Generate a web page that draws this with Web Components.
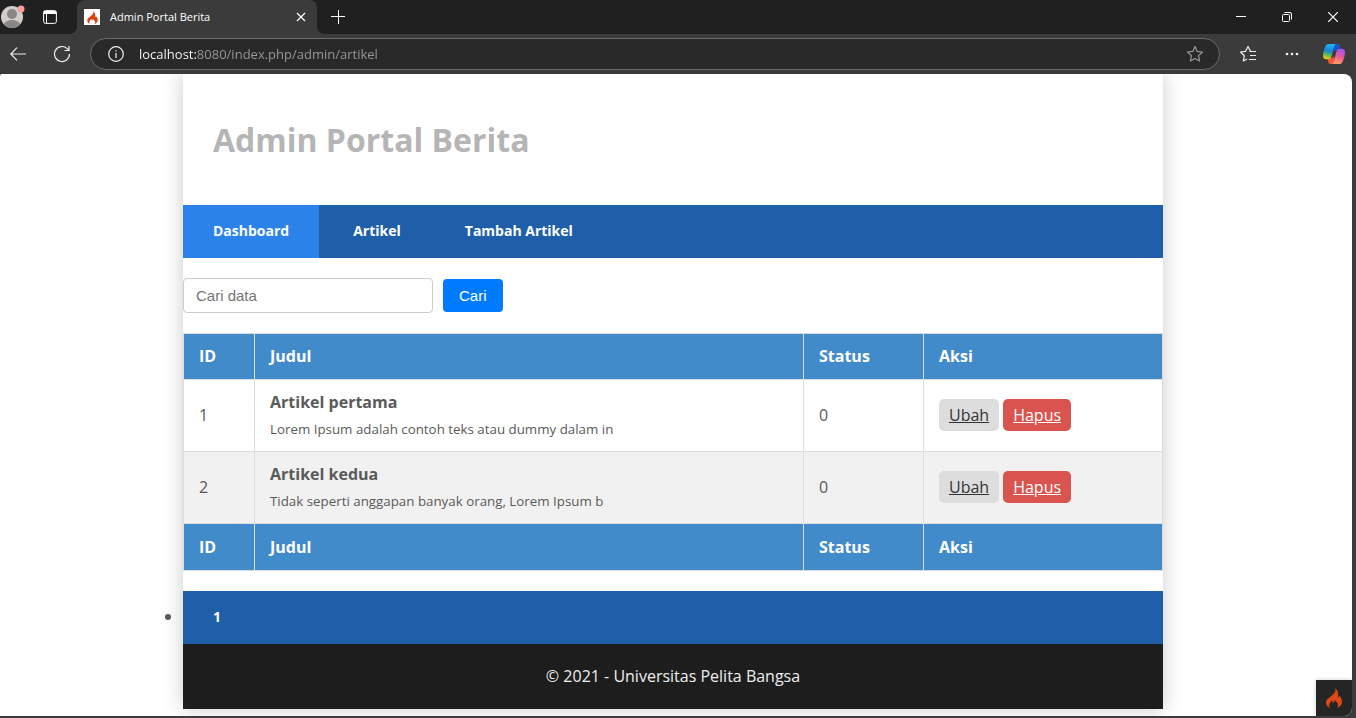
<!DOCTYPE html>
<html lang="id">
<head>
<meta charset="utf-8">
<meta name="viewport" content="width=device-width, initial-scale=1">
<title>Admin Portal Berita</title>
<style>
  html, body { margin: 0; }
  body { background: #3b3b3b; font-family: "Open Sans", "Noto Sans", sans-serif; font-size: 16px; color: #5a5a5a; }
</style>
</head>
<body>
<browser-window>
  <browser-tabs slot="tabs" label="Admin Portal Berita"></browser-tabs>
  <browser-toolbar slot="toolbar" url="localhost:8080/index.php/admin/artikel"></browser-toolbar>
  <portal-page>
    <portal-header slot="header">Admin Portal Berita</portal-header>
    <portal-nav slot="nav"></portal-nav>
    <search-form></search-form>
    <article-table></article-table>
    <page-list slot="pager"></page-list>
    <portal-footer slot="footer">© 2021 - Universitas Pelita Bangsa</portal-footer>
  </portal-page>
  <debug-toggle slot="corner"></debug-toggle>
</browser-window>

<script>
const FLAME = '<path d="M9 0C10.500 3.500 8 5.500 5.500 7.800 2.500 10.500 0 11.500 0 14.500 0 17.300 1.800 19.300 4.500 20 3 18.600 2.800 16.800 3.800 15.200 4.600 14 5.600 13.400 5.600 12 6.600 12.800 6.800 14 6.600 14.900 8 15 8.600 13.600 8.300 12.200 10.600 13.600 12 15 12 17 12 18.400 11.400 19.400 10.600 20 14 19.200 16 17 16 13.800 16 11 14.600 9 13.200 7.600 13.200 8.600 12.800 9.300 12 9.600 12.800 5.500 11.800 2 9 0z"/>';

function define(name, html, setup) {
  const tpl = document.createElement('template');
  tpl.innerHTML = html;
  customElements.define(name, class extends HTMLElement {
    constructor() {
      super();
      this.attachShadow({ mode: 'open' }).append(tpl.content.cloneNode(true));
    }
    connectedCallback() { if (setup) setup(this, this.shadowRoot); }
  });
}

/* ---------- Browser frame ---------- */
define('browser-window', `
<style>
  :host { display: flex; flex-direction: column; min-height: 100vh; box-sizing: border-box; }
  main { flex: 1; position: relative; margin: 0 4px 2px 0; background: #fff; border-radius: 2px 8px 8px 0; overflow: hidden; }
  .corner { position: absolute; right: 0; bottom: 0; }
</style>
<slot name="tabs"></slot>
<slot name="toolbar"></slot>
<main><slot></slot><div class="corner"><slot name="corner"></slot></div></main>`);

define('browser-tabs', `
<style>
  :host { display: flex; height: 34px; background: #202020; color: #fff; font-size: 11px; line-height: 16px; }
  button { border: 0; padding: 0; background: none; color: inherit; display: grid; place-items: center; }
  svg { display: block; fill: none; stroke: #fff; }
  .me { width: 28px; }
  .panes { width: 44px; }
  .lead { display: flex; flex: none; width: 77px; }
  .tab { display: flex; align-items: center; box-sizing: border-box; width: 240px; padding: 0 8px 0 7px; background: #3b3b3b; border-radius: 8px 8px 0 0; position: relative; }
  .tab::before, .tab::after { content: ""; position: absolute; bottom: 0; width: 8px; height: 8px; }
  .tab::before { left: -8px; background: radial-gradient(circle at 0 0, #202020 8px, #3b3b3b 8px); }
  .tab::after { right: -8px; background: radial-gradient(circle at 100% 0, #202020 8px, #3b3b3b 8px); }
  .fav { width: 16px; height: 16px; background: #fff; display: grid; place-items: center; }
  .fav svg { fill: #d6430f; stroke: none; }
  .name { flex: 1; margin-left: 10px; }
  .tab button { width: 16px; height: 16px; }
  .add { width: 42px; }
  .wins { display: flex; margin-left: auto; }
  .wins button { width: 46px; }
</style>
<div class="lead">
  <button class="me" aria-label="Profil"><svg width="28" height="28" viewBox="0 0 28 28" stroke="none">
    <clipPath id="c"><circle cx="12" cy="14" r="11"/></clipPath>
    <g clip-path="url(#c)" stroke="none"><rect width="28" height="28" fill="#d0cdca"/><circle cx="12" cy="11" r="5" fill="#8a8683"/><ellipse cx="12" cy="22" rx="8" ry="5" fill="#8a8683"/></g>
    <circle cx="21" cy="6" r="3.500" fill="#ff9b9b" stroke="none"/></svg></button>
  <button class="panes" aria-label="Tab"><svg width="14" height="14" viewBox="0 0 14 14"><rect x=".6" y=".6" width="12.800" height="12.800" rx="2"/><path d="M1 1.500h12v2H1z" fill="#fff"/><path d="M3.500 3v10"/></svg></button>
</div>
<div class="tab">
  <span class="fav"><svg width="11" height="13" viewBox="0 0 16 20">${FLAME}</svg></span>
  <span class="name"></span>
  <button aria-label="Tutup tab"><svg width="10" height="10" viewBox="0 0 10 10" stroke-width="1.200"><path d="M1 1l8 8M9 1l-8 8"/></svg></button>
</div>
<button class="add" aria-label="Tab baru"><svg width="14" height="14" viewBox="0 0 14 14"><path d="M7.500 0v14M0 6.500h14"/></svg></button>
<div class="wins">
  <button aria-label="Kecilkan"><svg width="10" height="10" viewBox="0 0 10 10"><path d="M0 4.500h10"/></svg></button>
  <button aria-label="Pulihkan"><svg width="10" height="10" viewBox="0 0 10 10"><rect x=".5" y="2.500" width="7" height="7" rx="1"/><path d="M2.500.5H8A1.500 1.500 0 0 1 9.500 2v5.500"/></svg></button>
  <button aria-label="Tutup"><svg width="10" height="10" viewBox="0 0 10 10" stroke-width="1.200"><path d="M0 0l10 10M10 0L0 10"/></svg></button>
</div>`, (el, root) => { root.querySelector('.name').textContent = el.getAttribute('label'); });

define('browser-toolbar', `
<style>
  :host { display: flex; align-items: center; height: 40px; background: #3b3b3b; }
  button { flex: none; border: 0; padding: 0; background: none; display: grid; place-items: center; height: 32px; }
  svg { display: block; fill: none; stroke: #f0f0f0; stroke-width: 1.2; }
  .back { width: 36px; }
  .reload { width: 52px; }
  .bar { flex: 1; display: flex; align-items: center; box-sizing: border-box; height: 32px; margin: 0 4px 0 2px; border: 1px solid #6b6b6b; border-radius: 16px; background: #292929; }
  .info { width: 48px; padding-left: 2px; }
  .star { width: 48px; }
  .star svg { stroke: #9a9a9a; }
  input { flex: 1; min-width: 0; margin: 0; padding: 0; border: 0; outline: 0; font: 13px/20px "Open Sans", sans-serif;
    color: transparent; background: linear-gradient(90deg, #fff 57px, #9a9a9a 57px); -webkit-background-clip: text; background-clip: text; }
  .fav { width: 48px; }
  .more { width: 40px; }
  .pilot { width: 44px; }
</style>
<button class="back" aria-label="Kembali"><svg width="16" height="14" viewBox="0 0 16 14"><path d="M16 7H1M7 .7L.8 7 7 13.300"/></svg></button>
<button class="reload" aria-label="Muat ulang"><svg width="18" height="18" viewBox="0 0 18 18"><path d="M16.500 9A7.500 7.500 0 1 1 14.200 3.600L15.800 5.200M16 1v4.500h-4.500"/></svg></button>
<div class="bar">
  <button class="info" aria-label="Info situs"><svg width="16" height="16" viewBox="0 0 16 16"><circle cx="8" cy="8" r="7.300"/><path d="M8 7v5M8 4.200v1.400"/></svg></button>
  <input aria-label="Alamat" spellcheck="false">
  <button class="star" aria-label="Favorit"><svg width="18" height="18" viewBox="0 0 18 18"><path stroke-linejoin="round" d="M9 1.500l2.200 4.900 5.300.6-3.900 3.600 1 5.400L9 13.400 4.400 16l1-5.400L1.500 7l5.300-.6z"/></svg></button>
</div>
<button class="fav" aria-label="Daftar favorit"><svg width="18" height="18" viewBox="0 0 18 18"><path stroke-linejoin="round" d="M12 6.500L11.300 6 9 1.500 6.600 6.300 1.500 7l3.800 3.700-1 5.300L8 14M10.500 6.500h6.500M11 10.500h6M10 14.500h7"/></svg></button>
<button class="more" aria-label="Lainnya"><svg width="14" height="4" viewBox="0 0 14 4"><g fill="#f0f0f0" stroke="none"><circle cx="2" cy="2" r="1.300"/><circle cx="7" cy="2" r="1.300"/><circle cx="12" cy="2" r="1.300"/></g></svg></button>
<button class="pilot" aria-label="Copilot"><svg width="22" height="20" viewBox="0 0 22 20">
  <defs>
    <linearGradient id="a" x1=".5" y1="0" x2=".3" y2="1"><stop offset="0" stop-color="#25b5f2"/><stop offset=".45" stop-color="#1387d8"/><stop offset=".7" stop-color="#59b857"/><stop offset="1" stop-color="#f4cf10"/></linearGradient>
    <linearGradient id="b" x1=".7" y1="0" x2=".3" y2="1"><stop offset="0" stop-color="#a24ff0"/><stop offset=".5" stop-color="#ee5a96"/><stop offset="1" stop-color="#ffa45c"/></linearGradient>
  </defs>
  <g stroke="none">
    <path d="M10 0h4.500c1.200 0 1.800.7 2.100 1.800L17.500 6H14c-1.600 0-2.500.8-3 2z" fill="#1556cf"/>
    <path d="M12 20H7.500c-1.200 0-1.800-.7-2.100-1.800L4.500 14H8c1.600 0 2.500-.8 3-2z" fill="#f2553d"/>
    <path d="M5.500 0h7.800c-1.200.3-1.900 1.400-2.300 2.700L8.700 12c-.6 2-1.600 3.200-3.700 3.200H3C1 15.200 0 13.800 0 11.700 0 8.500 1.300 4.500 2.400 2.300 3.100.8 4 0 5.500 0z" fill="url(#a)"/>
    <path d="M16.500 20H8.700c1.200-.3 1.900-1.400 2.300-2.700L13.300 8c.6-2 1.600-3.200 3.700-3.200h2c2 0 3 1.400 3 3.500 0 3.200-1.300 7.200-2.400 9.400-.7 1.500-1.600 2.300-3.100 2.300z" fill="url(#b)"/>
  </g></svg></button>`, (el, root) => { root.querySelector('input').value = el.getAttribute('url'); });

/* ---------- Portal page ---------- */
define('portal-page', `
<style>
  :host { display: block; padding: 0 6px 7px 0; }
  .sheet { max-width: 980px; margin: 0 auto; background: #fff; box-shadow: 0 0 20px #ccc; }
  .content { padding: 20px 0; display: grid; gap: 20px; }
</style>
<div class="sheet">
  <slot name="header"></slot>
  <slot name="nav"></slot>
  <div class="content"><slot></slot></div>
  <slot name="pager"></slot>
  <slot name="footer"></slot>
</div>`);

define('portal-header', `
<style>
  :host { display: block; padding: 44px 30px 43px; }
  h1 { margin: 0; font-size: 32px; line-height: 44px; font-weight: 700; color: #b5b5b5; }
</style>
<h1><slot></slot></h1>`);

define('portal-nav', `
<style>
  :host { display: block; background: #1f5faa; }
  nav { display: flex; flex-wrap: wrap; gap: 4px; }
  a { padding: 15px 30px 17px; font-size: 14px; line-height: 21px; font-weight: 700; color: #fff; text-decoration: none; }
  a.active { background: #2b83ea; }
</style>
<nav>
  <a class="active" href="#dashboard">Dashboard</a>
  <a href="#artikel">Artikel</a>
  <a href="#tambah">Tambah Artikel</a>
</nav>`);

define('search-form', `
<style>
  :host { display: block; }
  form { display: flex; align-items: center; gap: 10px; }
  input, button { font: 15px/17px "Liberation Sans", Arial, sans-serif; border-radius: 4px; box-sizing: border-box; margin: 0; }
  input { width: 250px; padding: 8px 12px; border: 1px solid #ccc; background: #fff; color: #333; }
  input::placeholder { color: #757575; }
  button { padding: 8px 16px; border: 0; background: #007bff; color: #fff; }
</style>
<form onsubmit="return false">
  <input type="text" placeholder="Cari data" aria-label="Cari data">
  <button type="submit">Cari</button>
</form>`);

define('article-table', `
<style>
  :host { display: block; }
  table { width: 100%; table-layout: fixed; border-collapse: collapse; line-height: 21px; }
  .id { width: 71px; } .status { width: 120px; } .aksi { width: 239px; }
  th, td { padding: 12px 14px 12px 15px; border: 1px solid #ddd; text-align: left; }
  th { background: #428bca; color: #fff; font-weight: 700; }
  tfoot { line-height: 22px; }
  tbody tr:nth-child(even) { background: #f1f1f1; }
  p { margin: 6px 0 0; font-size: smaller; line-height: 20px; }
  .actions { display: flex; gap: 4px; }
  a { padding: 5px 10px; line-height: 22px; border-radius: 5px; background: #ddd; color: #333; }
  a.danger { background: #d9534f; color: #fff; }
  td:last-child { padding: 0 14px 2px 15px; }
</style>
<table>
  <colgroup><col class="id"><col><col class="status"><col class="aksi"></colgroup>
  <thead><tr><th>ID</th><th>Judul</th><th>Status</th><th>Aksi</th></tr></thead>
  <tbody></tbody>
  <tfoot><tr><th>ID</th><th>Judul</th><th>Status</th><th>Aksi</th></tr></tfoot>
</table>`, (el, root) => {
  const rows = [
    [1, 'Artikel pertama', 'Lorem Ipsum adalah contoh teks atau dummy dalam in', 0],
    [2, 'Artikel kedua', 'Tidak seperti anggapan banyak orang, Lorem Ipsum b', 0]
  ];
  root.querySelector('tbody').innerHTML = rows.map(([id, title, text, status]) =>
    `<tr><td>${id}</td><td><b>${title}</b><p>${text}</p></td><td>${status}</td>
     <td><div class="actions"><a href="#ubah-${id}">Ubah</a><a class="danger" href="#hapus-${id}">Hapus</a></div></td></tr>`).join('');
});

define('page-list', `
<style>
  :host { display: block; background: #1f5faa; }
  ul { margin: 0; padding: 0; }
  li { line-height: 21px; padding: 15px 0 17px; }
  a { padding: 15px 30px 17px; font-size: 14px; font-weight: 700; color: #fff; text-decoration: none; }
</style>
<ul><li><a href="#1">1</a></li></ul>`);

define('portal-footer', `
<style>
  :host { display: block; background: #1d1d1d; color: #eee; text-align: center; padding: 20px; line-height: 25px; }
</style>
<slot></slot>`);

define('debug-toggle', `
<style>
  :host { display: block; }
  button { display: grid; place-items: center; width: 36px; height: 36px; border: 0; padding: 0; background: #252525; box-shadow: 0 0 4px #ccc; }
  svg { fill: #dd4814; }
</style>
<button aria-label="Debug"><svg width="16" height="20" viewBox="0 0 16 20">${FLAME}</svg></button>`);
</script>
</body>
</html>
